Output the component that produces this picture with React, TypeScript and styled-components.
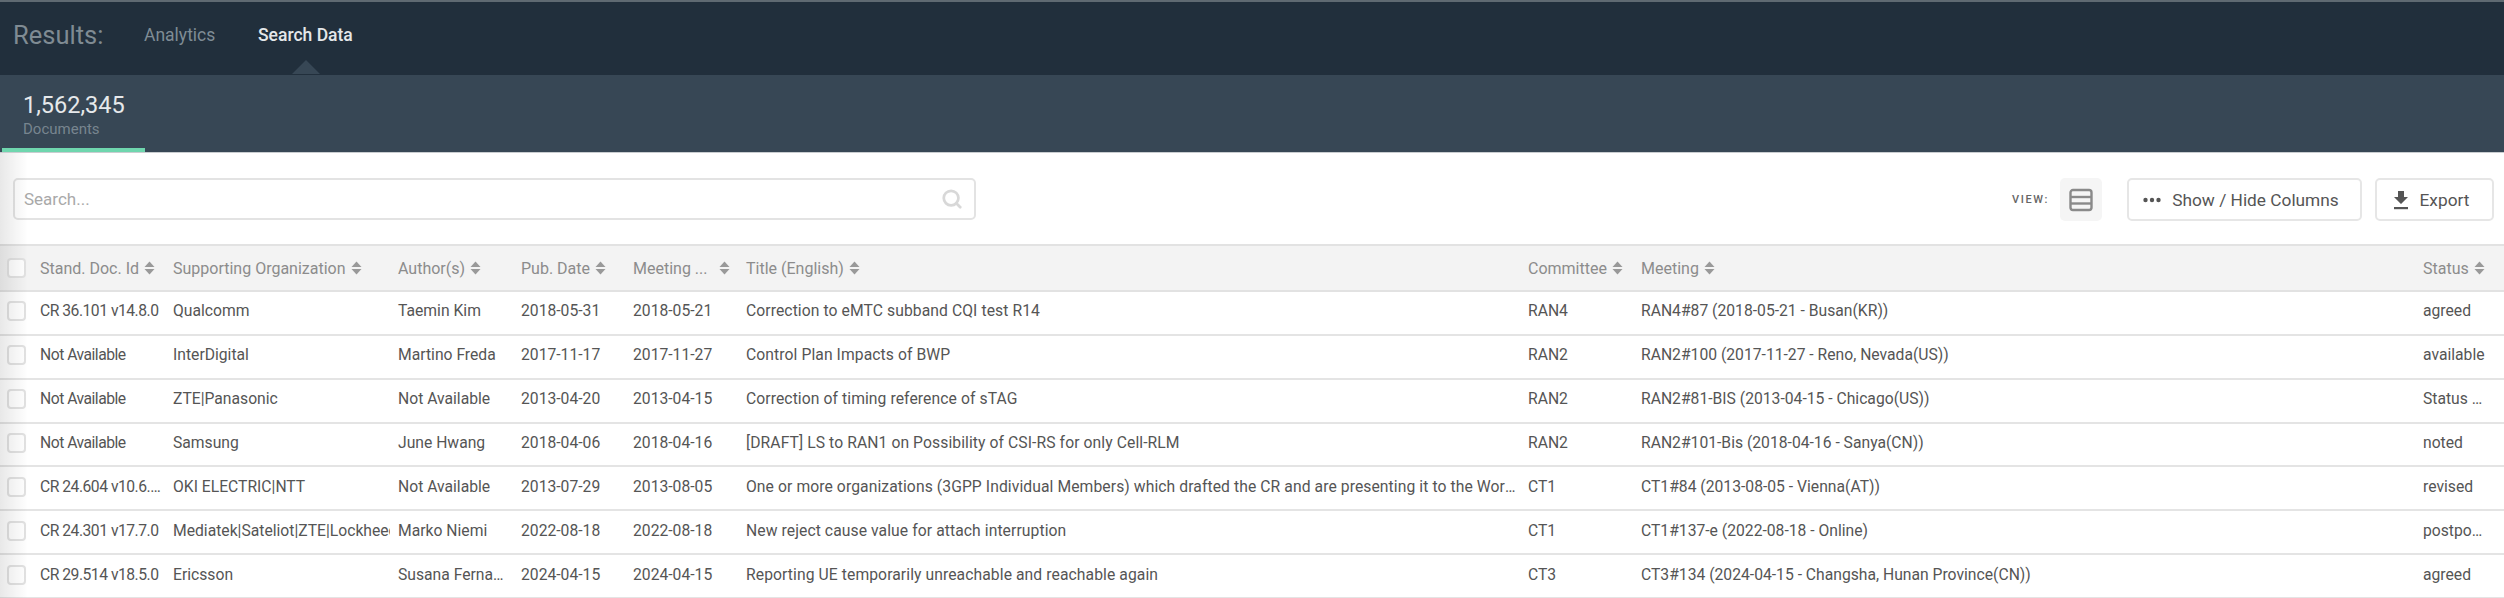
import React from 'react';
import styled, { createGlobalStyle } from 'styled-components';
import { Search } from 'lucide-react';

const GlobalStyle = createGlobalStyle`
    html, body {
        margin: 0;
        padding: 0;
        background: #fff;
        font-family: Roboto, "Open Sans", sans-serif;
    }
    * { box-sizing: border-box; }
`;

const Page = styled.div`
    width: 2504px;
    height: 598px;
    overflow: hidden;
    display: flex;
    flex-direction: column;
`;

const TopBar = styled.div`
    height: 75px;
    flex: none;
    display: flex;
    align-items: center;
    padding: 0 0 7px 13px;
    background: #212f3c;
    border-top: 2px solid #5f6a72;
`;

const Heading = styled.div`
    font-size: 25.5px;
    color: #7f8b93;
    width: 131px;
`;

const NavItem = styled.div<{ $active?: boolean }>`
    position: relative;
    font-size: 17.5px;
    width: 114px;
    color: ${p => (p.$active ? '#e4e7e9' : '#7f8c95')};
    font-weight: ${p => (p.$active ? 500 : 400)};
    ${p => p.$active && `
        &::after {
            content: '';
            position: absolute;
            left: 34px;
            bottom: -29px;
            border-left: 14px solid transparent;
            border-right: 14px solid transparent;
            border-bottom: 14px solid #374755;
        }
    `}
`;

const StatsBar = styled.div`
    height: 78px;
    flex: none;
    display: flex;
    background: #374755;
    padding-left: 2px;
    border-bottom: 1px solid #c9cdd0;
`;

const StatTab = styled.div`
    width: 143px;
    height: 77px;
    padding: 16px 0 0 21px;
    border-bottom: 4px solid #6fd6ae;
`;

const StatValue = styled.div`
    font-size: 23.5px;
    line-height: 29px;
    color: #e6e9eb;
`;

const StatLabel = styled.div`
    font-size: 15px;
    line-height: 19px;
    color: #77858f;
`;

const Content = styled.div`
    position: relative;
    flex: 1;
    &::after {
        content: '';
        position: absolute;
        top: 0;
        bottom: 0;
        left: 0;
        width: 28px;
        background: linear-gradient(to right, rgba(0, 0, 0, 0.09), rgba(0, 0, 0, 0));
        pointer-events: none;
    }
`;

const Toolbar = styled.div`
    height: 91px;
    display: flex;
    align-items: flex-start;
    padding: 25px 10px 0 13px;
`;

const SearchBox = styled.div`
    width: 963px;
    height: 42px;
    display: flex;
    align-items: center;
    justify-content: space-between;
    padding: 0 11px 0 9px;
    border: 2px solid #e3e3e3;
    border-radius: 5px;
    font-size: 17px;
    color: #a9a9a9;
    svg { color: #d8d8d8; }
`;

const ToolbarRight = styled.div`
    margin-left: auto;
    display: flex;
    align-items: center;
`;

const ViewLabel = styled.span`
    font-size: 11px;
    font-weight: 500;
    letter-spacing: 1.6px;
    color: #666;
    margin-right: 11px;
`;

const ViewToggle = styled.div`
    width: 42px;
    height: 43px;
    display: flex;
    align-items: center;
    justify-content: center;
    background: #f5f5f5;
    border-radius: 5px;
    margin-right: 25px;
`;

const ToolButton = styled.div<{ $width: number }>`
    width: ${p => p.$width}px;
    height: 43px;
    display: flex;
    align-items: center;
    justify-content: center;
    gap: 11px;
    margin-right: 13px;
    padding-right: 7px;
    border: 2px solid #e6e6e6;
    border-radius: 5px;
    font-size: 17.3px;
    color: #555;
    &:last-child { margin-right: 0; }
`;

const Table = styled.table`
    width: 2504px;
    table-layout: fixed;
    border-collapse: collapse;
    font-size: 15.7px;
`;

const HeadRow = styled.tr`
    height: 46px;
    background: #f3f3f3;
    border-top: 2px solid #e2e2e2;
    border-bottom: 2px solid #e2e2e2;
`;

const Row = styled.tr`
    height: 43.86px;
    border-bottom: 2px solid #e4e4e4;
`;

const Th = styled.th<{ $width?: number }>`
    ${p => p.$width && `width: ${p.$width}px;`}
    padding: 0 3px 0 8px;
    text-align: left;
    font-size: 16px;
    font-weight: 400;
    color: #8c8c8c;
    white-space: nowrap;
    overflow: hidden;
`;

const Td = styled.td<{ $clip?: boolean; $last?: boolean; $tight?: boolean; $wide?: boolean }>`
    padding: 0 ${p => (p.$last ? 16 : 3)}px 4px 8px;
    color: #555;
    white-space: nowrap;
    overflow: hidden;
    text-overflow: ${p => (p.$clip ? 'clip' : 'ellipsis')};
    ${p => p.$tight && 'letter-spacing: -0.5px;'}
    ${p => p.$wide && 'letter-spacing: 0.08px;'}
`;

const HeadInner = styled.span<{ $spread?: boolean }>`
    display: flex;
    align-items: center;
    gap: 5px;
    ${p => p.$spread && 'justify-content: space-between; padding-right: 5px;'}
`;

const Checkbox = styled.span`
    display: block;
    width: 19px;
    height: 20px;
    margin-left: 7px;
    border: 2px solid #e2e2e2;
    border-radius: 4px;
    background: #fff;
`;

const CheckCell = styled.td`
    padding: 0 0 3px;
`;

const CheckHead = styled.th`
    width: 32px;
    padding: 0;
`;

const SortIcon = () => (
    <svg width="11" height="14" viewBox="0 0 11 14" fill="#999">
        <path d="M5.5 0.5 L10.5 6 H0.5 Z" />
        <path d="M5.5 13.5 L10.5 8 H0.5 Z" />
    </svg>
);

const RowsIcon = () => (
    <svg width="24" height="24" viewBox="0 0 24 24" fill="none" stroke="#8a8a8a" strokeWidth="2.4">
        <rect x="1.5" y="2" width="21" height="20" rx="2.5" />
        <line x1="1.5" y1="9" x2="22.5" y2="9" />
        <line x1="1.5" y1="15.5" x2="22.5" y2="15.5" />
    </svg>
);

const DotsIcon = () => (
    <svg width="18" height="6" viewBox="0 0 18 6" fill="#555">
        <circle cx="2.5" cy="3" r="2.2" />
        <circle cx="9" cy="3" r="2.2" />
        <circle cx="15.5" cy="3" r="2.2" />
    </svg>
);

const ExportIcon = () => (
    <svg width="16" height="20" viewBox="0 0 16 20" fill="#555">
        <path d="M5 1 H11 V7 H15 L8 14 L1 7 H5 Z" />
        <rect x="1" y="17" width="14" height="2.2" />
    </svg>
);

const columns = [
    { label: 'Stand. Doc. Id', width: 133 },
    { label: 'Supporting Organization', width: 225 },
    { label: 'Author(s)', width: 123 },
    { label: 'Pub. Date', width: 112 },
    { label: 'Meeting ...', width: 113, spread: true },
    { label: 'Title (English)', width: 782 },
    { label: 'Committee', width: 113 },
    { label: 'Meeting', width: 782 },
    { label: 'Status', width: 89 },
];

const rows = [
    ['CR 36.101 v14.8.0', 'Qualcomm', 'Taemin Kim', '2018-05-31', '2018-05-21', 'Correction to eMTC subband CQI test R14', 'RAN4', 'RAN4#87 (2018-05-21 - Busan(KR))', 'agreed'],
    ['Not Available', 'InterDigital', 'Martino Freda', '2017-11-17', '2017-11-27', 'Control Plan Impacts of BWP', 'RAN2', 'RAN2#100 (2017-11-27 - Reno, Nevada(US))', 'available'],
    ['Not Available', 'ZTE|Panasonic', 'Not Available', '2013-04-20', '2013-04-15', 'Correction of timing reference of sTAG', 'RAN2', 'RAN2#81-BIS (2013-04-15 - Chicago(US))', 'Status Unknown'],
    ['Not Available', 'Samsung', 'June Hwang', '2018-04-06', '2018-04-16', '[DRAFT] LS to RAN1 on Possibility of CSI-RS for only Cell-RLM', 'RAN2', 'RAN2#101-Bis (2018-04-16 - Sanya(CN))', 'noted'],
    ['CR 24.604 v10.6.0 and more', 'OKI ELECTRIC|NTT', 'Not Available', '2013-07-29', '2013-08-05', 'One or more organizations (3GPP Individual Members) which drafted the CR and are presenting it to the Working Group', 'CT1', 'CT1#84 (2013-08-05 - Vienna(AT))', 'revised'],
    ['CR 24.301 v17.7.0', 'Mediatek|Sateliot|ZTE|Lockheed Martin', 'Marko Niemi', '2022-08-18', '2022-08-18', 'New reject cause value for attach interruption', 'CT1', 'CT1#137-e (2022-08-18 - Online)', 'postponed'],
    ['CR 29.514 v18.5.0', 'Ericsson', 'Susana Fernandez', '2024-04-15', '2024-04-15', 'Reporting UE temporarily unreachable and reachable again', 'CT3', 'CT3#134 (2024-04-15 - Changsha, Hunan Province(CN))', 'agreed'],
];

export default function App() {
    return (
        <Page>
            <GlobalStyle />
            <TopBar>
                <Heading>Results:</Heading>
                <NavItem>Analytics</NavItem>
                <NavItem $active>Search Data</NavItem>
            </TopBar>
            <StatsBar>
                <StatTab>
                    <StatValue>1,562,345</StatValue>
                    <StatLabel>Documents</StatLabel>
                </StatTab>
            </StatsBar>
            <Content>
                <Toolbar>
                    <SearchBox>
                        Search...
                        <Search size={22} strokeWidth={3} />
                    </SearchBox>
                    <ToolbarRight>
                        <ViewLabel>VIEW:</ViewLabel>
                        <ViewToggle><RowsIcon /></ViewToggle>
                        <ToolButton $width={235}>
                            <DotsIcon />
                            Show / Hide Columns
                        </ToolButton>
                        <ToolButton $width={119}>
                            <ExportIcon />
                            Export
                        </ToolButton>
                    </ToolbarRight>
                </Toolbar>
                <Table>
                    <thead>
                        <HeadRow>
                            <CheckHead><Checkbox /></CheckHead>
                            {columns.map((c, i) => (
                                <Th key={i} $width={c.width}>
                                    <HeadInner $spread={c.spread}>
                                        {c.label}
                                        <SortIcon />
                                    </HeadInner>
                                </Th>
                            ))}
                        </HeadRow>
                    </thead>
                    <tbody>
                        {rows.map((r, i) => (
                            <Row key={i}>
                                <CheckCell><Checkbox /></CheckCell>
                                {r.map((v, j) => (
                                    <Td key={j} $clip={j === 1} $last={j === 8} $tight={j === 0} $wide={j === 5}>{v}</Td>
                                ))}
                            </Row>
                        ))}
                    </tbody>
                </Table>
            </Content>
        </Page>
    );
}
